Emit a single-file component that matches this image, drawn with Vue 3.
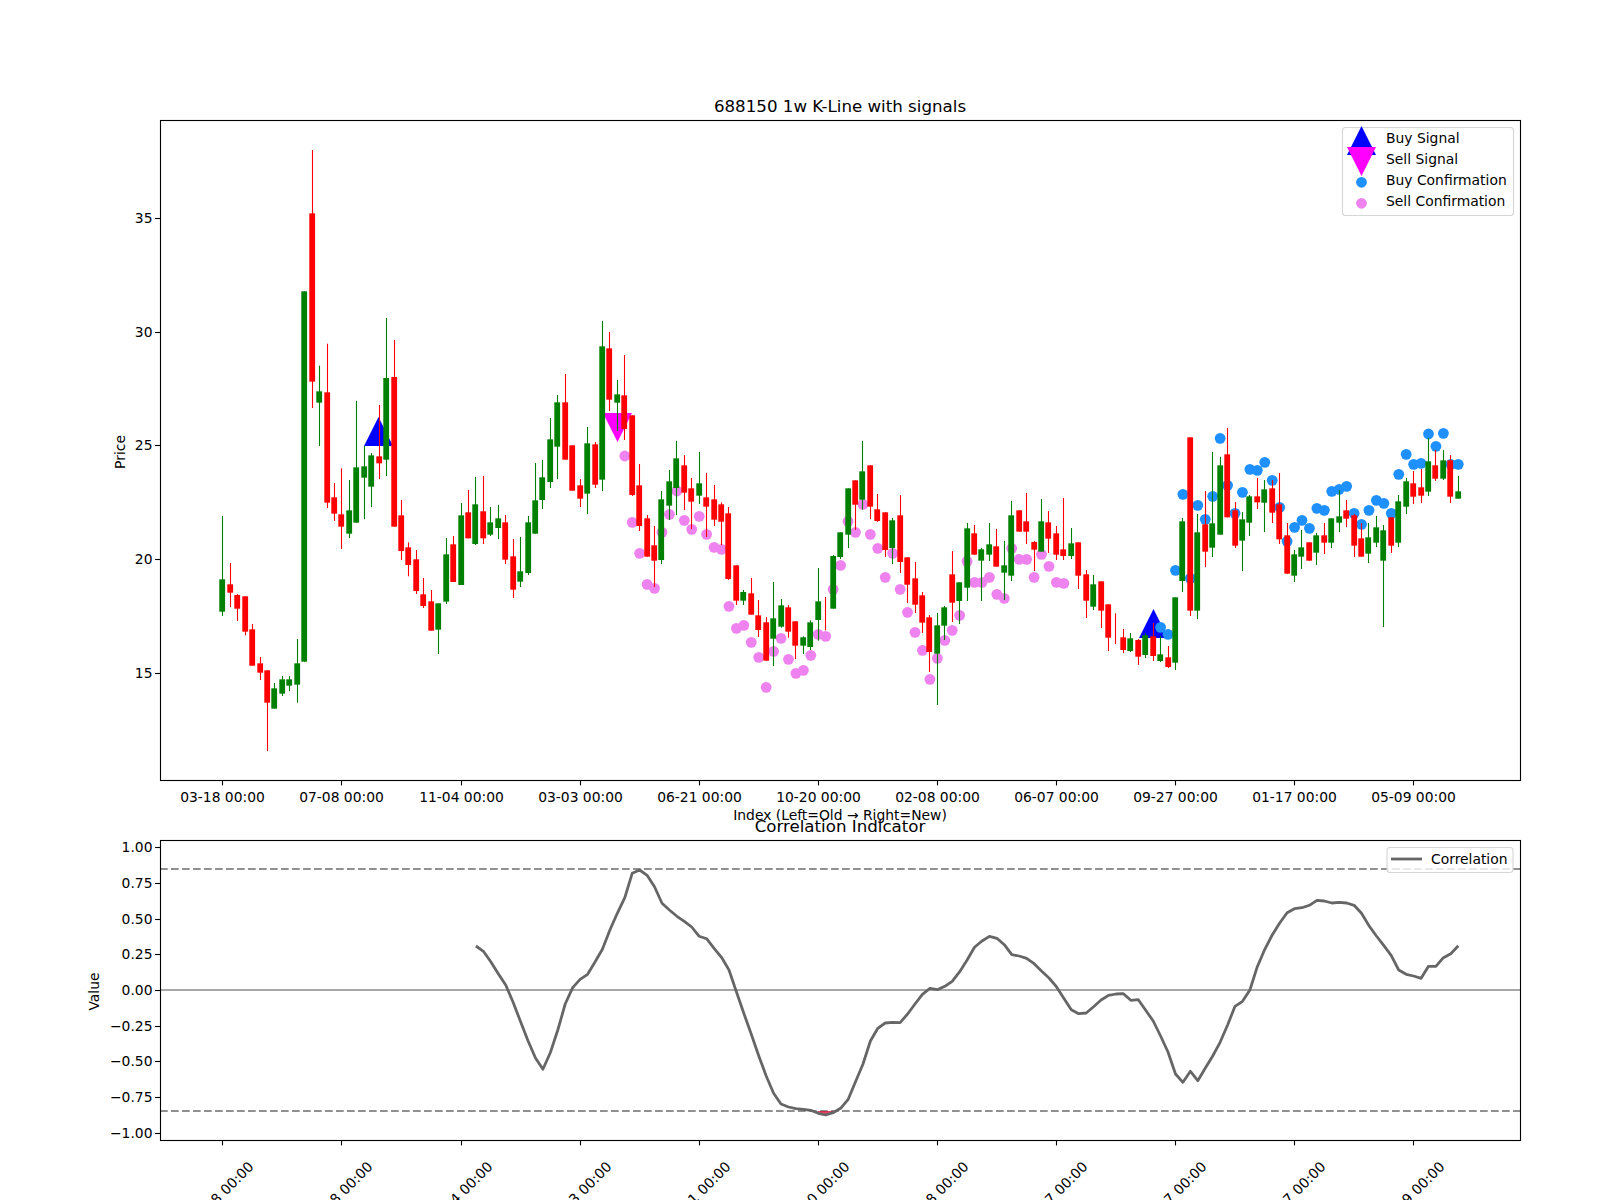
<script setup>
import { computed } from "vue"

// ------------------------------------------------------------
// Axes geometry (px on the 1600x1200 figure)
// ------------------------------------------------------------
const left = 160
const right = 1520
const priceTop = 120
const priceBottom = 780
const corrTop = 840
const corrBottom = 1140
const step = 7.442
const slotX = (i) => 222.9 + step * i
const priceY = (p) => 673.2 - (p - 15) * 22.78
const corrY = (v) => 990 - v * 142.7

// ------------------------------------------------------------
// Weekly candles: [colour, high, low, bodyTop, bodyBottom]
// in 1/3 px, measured from the "top" of their block
// ------------------------------------------------------------
const blocks = [
  { top: 380, rows: [
    ["g",408,708,598,695],["r",549,681,613,638],["r",642,723,645,686],["r",649,766,649,755],
    ["r",732,857,748,857],["r",831,900,850,878],["r",871,1113,871,968],["g",909,986,925,986],
    ["g",888,948,898,941],["g",888,933,898,917],["g",777,968,850,914],["g",-266,845,-266,845],
    ["r",-690,84,-500,5],["g",-43,198,34,68],["r",-109,384,37,368],["r",309,423,352,401],
    ["r",265,507,403,440],["g",300,474,391,461],["g",63,428,262,428],["g",198,417,259,293],
    ["g",219,381,226,320],["r",75,297,229,250],["g",-186,288,-6,239],["r",-120,440,-9,440],
    ["r",360,540,406,513],["r",487,589,502,555],["r",510,642,538,633],["r",594,684,643,678],
    ["r",630,752,664,752],["g",670,822,670,749],["g",474,672,523,665],["r",468,606,493,606],
    ["g",369,615,406,615],["r",330,475,397,475],["g",291,495,373,492],
  ] },
  { top: 310, rows: [
    ["r",498,702,604,685],["g",591,678,637,674],["g",585,687,625,654],["r",615,762,637,749],
    ["r",687,864,739,839],["g",681,831,784,815],["g",618,795,637,789],["g",459,671,571,671],
    ["g",450,597,502,570],["g",324,534,388,516],["g",255,507,277,410],["r",192,449,277,449],
    ["r",406,542,406,542],["r",507,591,526,566],["g",351,612,400,551],["r",396,534,403,524],
    ["g",33,543,109,509],["r",66,303,115,269],["g",210,363,253,278],["r",135,390,256,357],
    ["r",316,558,316,555],["r",462,663,526,648],["r",615,740,625,740],["r",648,831,706,752],
    ["g",543,762,568,750],["g",480,630,514,587],["g",393,615,445,534],["r",435,600,466,548],
    ["r",504,657,535,575],["g",426,582,520,557],["r",489,681,562,590],["r",525,648,568,629],
    ["r",577,705,583,635],["r",591,810,610,807],["r",766,885,766,872],["g",840,885,846,872],
    ["r",804,914,850,914],["r",870,981,916,960],
  ] },
  { top: 420, rows: [
    ["r",591,722,607,722],["g",486,738,595,656],["g",537,623,556,620],["r",555,653,562,635],
    ["r",604,717,604,677],["g",649,702,652,677],["g",601,690,607,681],["g",444,662,544,600],
    ["r",531,631,581,581],["g",405,566,408,566],["g",337,417,337,411],["g",205,384,205,344],
    ["r",181,330,181,254],["g",63,269,154,239],["r",136,297,136,260],["r",222,306,268,303],
    ["r",277,411,277,390],["g",294,432,301,384],["r",225,459,286,426],["r",412,549,412,494],
    ["r",426,579,475,554],["r",516,639,526,608],["r",585,756,592,696],["g",579,855,616,701],
    ["g",558,660,562,617],["r",393,606,463,548],["g",487,612,487,543],["g",309,543,325,503],
    ["r",315,404,340,404],["g",384,543,388,422],["g",309,423,373,404],["r",327,440,379,440],
    ["g",363,540,436,458],["g",243,483,286,467],["r",271,335,271,335],["r",219,372,304,335],
    ["r",363,453,366,389],
  ] },
  { top: 400, rows: [
    ["g",297,455,364,455],["r",333,459,367,416],["r",378,480,400,464],["r",294,480,448,468],
    ["g",384,477,430,468],["r",427,567,427,527],["r",510,654,523,602],["g",525,630,553,620],
    ["r",544,684,544,632],["r",613,753,613,713],["r",640,732,686,686],["r",687,759,712,750],
    ["g",699,756,715,753],["r",717,795,720,770],["g",700,774,706,765],["r",669,783,709,768],
    ["g",708,786,763,783],["r",738,804,772,801],["g",592,810,592,788],["g",354,576,364,543],
    ["r",112,648,112,632],["g",342,657,397,632],["r",273,501,373,455],["g",156,471,370,443],
    ["g",171,404,196,404],["r",84,352,163,352],["r",306,444,331,437],["g",336,513,358,422],
    ["g",285,408,289,368],["r",234,327,289,307],["g",240,396,268,308],["r",240,369,265,338],
    ["r",219,432,313,418],["r",369,521,406,521],["g",450,546,463,527],["g",390,507,442,470],
    ["r",427,482,427,482],["g",399,495,406,458],["r",369,462,406,428],["g",355,444,355,428],
    ["g",270,396,349,368],["r",300,381,331,356],["r",342,471,346,437],["r",369,470,415,470],
    ["g",369,489,412,461],["g",348,441,382,428],["g",375,681,391,482],["r",352,459,352,437],
    ["g",285,441,304,428],["g",234,342,244,320],["r",213,312,250,290],["r",207,309,262,287],
    ["g",114,288,184,275],["r",150,243,196,236],["g",150,240,181,236],["r",165,309,181,290],
    ["g",228,296,274,296],
  ] },
]

const candles = computed(() => {
  const out = []
  for (const b of blocks) {
    for (const [c, hi, lo, top, bot] of b.rows) {
      const i = out.length
      const cx = Math.floor(slotX(i))
      const y0 = b.top + top / 3
      const y1 = b.top + bot / 3
      out.push({
        i,
        color: c === "g" ? "#008000" : "#ff0000",
        wickX: cx + 0.5,
        hi: b.top + hi / 3,
        lo: b.top + lo / 3,
        bodyX: cx - 2.7,
        bodyY: y0,
        // a few weeks have no real body, only the wick shows
        bodyH: y1 - y0,
      })
    }
  }
  return out
})

// ------------------------------------------------------------
// Confirmation dots
// ------------------------------------------------------------
const sellA = [438,637,730,823,835,667,613,543,631,658,619,673,712,718,889,955,946,997,1042]
const sellB = [802,694,655,718,760,751,706,643,649,508,436,304,337,253,343,385,472,400,508,577,637,691,778,715,661,631,586,424,487,487,472,523,535,385,418,418,472,403,439,487,490]
const buyDots = [682,703,511,283,535,316,358,289,115,256,340,277,208,211,187,241,322,424,382,361,385,325,331,274,268,259,340,373,331,301,310,340,223,163,193,190,102,139,100,193,193]

const sellPoints = computed(() => [
  ...sellA.map((z, k) => ({ x: slotX(54 + k), y: 310 + z / 3 })),
  ...sellB.map((z, k) => ({ x: slotX(73 + k), y: 420 + z / 3 })),
])
const buyPoints = computed(() =>
  buyDots.map((z, k) => ({ x: slotX(126 + k), y: 400 + z / 3 }))
)

// ------------------------------------------------------------
// Correlation line, starts at candle 34
// ------------------------------------------------------------
const corrRaw = [
  288,304,335,371,405,457,515,572,624,658,608,540,462,413,388,373,336,298,240,190,143,70,60,76,110,160,
  180,199,214,231,259,266,295,322,360,425,490,553,617,678,730,762,771,776,778,781,790,795,788,775,749,
  695,643,573,535,519,517,518,492,462,433,415,419,409,394,365,330,292,273,259,265,284,314,318,325,341,
  363,384,410,445,479,491,489,470,450,436,432,431,451,449,481,513,558,606,672,697,664,692,655,618,577,
  525,469,454,420,350,298,255,219,188,176,173,166,151,153,159,157,159,166,190,227,258,287,317,360,373,
  378,385,349,349,323,311,287,
]
const corrLine = computed(() =>
  corrRaw.map((z, k) => `${slotX(34 + k).toFixed(1)},${(850 + z / 3).toFixed(1)}`).join(" ")
)
const corrFill = "816.5,1111 825,1115.5 835,1111"

// ------------------------------------------------------------
// Axes ticks
// ------------------------------------------------------------
const dates = ["03-18","07-08","11-04","03-03","06-21","10-20","02-08","06-07","09-27","01-17","05-09"]
const xTicks = dates.map((d, k) => ({
  x: Math.floor(slotX(k * 16)) + 0.5,
  label: `${d} 00:00`,
}))
const priceTicks = [15, 20, 25, 30, 35].map((p) => ({ y: Math.round(priceY(p)) + 0.5, label: String(p) }))
const corrTicks = [1, 0.75, 0.5, 0.25, 0, -0.25, -0.5, -0.75, -1].map((v) => ({
  y: Math.round(corrY(v)) + 0.5,
  label: v.toFixed(2).replace("-", "\u2212"),
}))
</script>

<template>
  <div class="figure">
    <svg class="chart" width="1600" height="1200" viewBox="0 0 1600 1200">
      <defs>
        <clipPath id="corr-clip">
          <rect :x="left" :y="corrTop" :width="right - left" :height="corrBottom - corrTop" />
        </clipPath>
      </defs>

      <!-- Price panel -->
      <text class="title" x="840" y="111.5">688150 1w K-Line with signals</text>

      <polygon class="buy" points="378.5,417 364,446 393,446" />
      <polygon class="buy" points="1153.5,609 1139,638 1168,638" />
      <polygon class="sell" points="603,413 632,413 617.5,442" />

      <circle v-for="(p, k) in sellPoints" :key="'s' + k" class="dot-sell" :cx="p.x" :cy="p.y" r="5.4" />
      <circle v-for="(p, k) in buyPoints" :key="'b' + k" class="dot-buy" :cx="p.x" :cy="p.y" r="5.4" />

      <g v-for="c in candles" :key="c.i">
        <line :x1="c.wickX" :x2="c.wickX" :y1="c.hi" :y2="c.lo" :stroke="c.color" stroke-width="1.1" />
        <rect v-if="c.bodyH > 0" :x="c.bodyX" :y="c.bodyY" width="5.8" :height="c.bodyH" :fill="c.color" />
      </g>

      <rect class="spine" :x="left + 0.5" :y="priceTop + 0.5" :width="right - left" :height="priceBottom - priceTop" />

      <g v-for="t in xTicks" :key="'px' + t.label">
        <line class="tick" :x1="t.x" :x2="t.x" :y1="priceBottom" :y2="priceBottom + 5.4" />
        <text class="label" :x="t.x" y="801.5">{{ t.label }}</text>
      </g>
      <g v-for="t in priceTicks" :key="'py' + t.label">
        <line class="tick" :x1="left - 4.9" :x2="left" :y1="t.y" :y2="t.y" />
        <text class="label end" x="152.5" :y="t.y + 4.6">{{ t.label }}</text>
      </g>
      <text class="label" x="840" y="820">Index (Left=Old → Right=New)</text>
      <text class="label" transform="translate(124.5 452) rotate(-90)">Price</text>

      <!-- Legend, signals -->
      <rect class="legend" x="1342.5" y="127.5" width="171" height="88" rx="3" />
      <polygon class="buy" points="1361.5,126 1347,155 1376,155" />
      <polygon class="sell" points="1347,147 1376,147 1361.5,176" />
      <circle class="dot-buy" cx="1361.5" cy="182.3" r="5.4" />
      <circle class="dot-sell" cx="1361.5" cy="203.3" r="5.4" />
      <text class="label start" x="1386" y="143">Buy Signal</text>
      <text class="label start" x="1386" y="164">Sell Signal</text>
      <text class="label start" x="1386" y="185">Buy Confirmation</text>
      <text class="label start" x="1386" y="206">Sell Confirmation</text>

      <!-- Correlation panel -->
      <text class="title" x="840" y="831.5">Correlation Indicator</text>
      <g clip-path="url(#corr-clip)">
        <line class="zero" :x1="left" :x2="right" y1="990" y2="990" />
        <line class="band" :x1="left" :x2="right" y1="869" y2="869" />
        <line class="band" :x1="left" :x2="right" y1="1111" y2="1111" />
        <polygon class="corr-fill" :points="corrFill" />
        <polyline class="corr-line" :points="corrLine" />
      </g>
      <rect class="spine" :x="left + 0.5" :y="corrTop + 0.5" :width="right - left" :height="corrBottom - corrTop" />

      <g v-for="t in xTicks" :key="'cx' + t.label">
        <line class="tick" :x1="t.x" :x2="t.x" :y1="corrBottom" :y2="corrBottom + 5.4" />
        <text class="label" :transform="`translate(${t.x - 1.5} 1194) rotate(-45)`" y="5">{{ t.label }}</text>
      </g>
      <g v-for="t in corrTicks" :key="'cy' + t.label">
        <line class="tick" :x1="left - 4.9" :x2="left" :y1="t.y" :y2="t.y" />
        <text class="label end" x="152.5" :y="t.y + 4.6">{{ t.label }}</text>
      </g>
      <text class="label" transform="translate(99 991.5) rotate(-90)">Value</text>

      <!-- Legend, correlation -->
      <rect class="legend" x="1387" y="847.5" width="126" height="25" rx="3" />
      <line class="corr-line" x1="1391" x2="1422" y1="859" y2="859" />
      <text class="label start" x="1431" y="864">Correlation</text>
    </svg>
  </div>
</template>

<style scoped>
.figure {
  width: 1600px;
  height: 1200px;
  overflow: hidden;
  background: #fff;
}

.chart {
  display: block;
  font-family: "DejaVu Sans", sans-serif;
}

.title {
  font-size: 16.67px;
  text-anchor: middle;
  fill: #000;
}

.label {
  font-size: 13.89px;
  text-anchor: middle;
  fill: #000;
}

.label.end { text-anchor: end }
.label.start { text-anchor: start }

.spine {
  fill: none;
  stroke: #000;
  stroke-width: 1.11;
}

.tick {
  stroke: #000;
  stroke-width: 1.11;
}

.buy { fill: #0000ff }
.sell { fill: #ff00ff }
.dot-buy { fill: #1e90ff }
.dot-sell { fill: #ee82ee }

.legend {
  fill: #fff;
  fill-opacity: 0.8;
  stroke: #d6d6d6;
  stroke-width: 1.1;
}

.zero {
  stroke: #a8a8a8;
  stroke-width: 2.08;
}

.band {
  stroke: #909090;
  stroke-width: 2.2;
  stroke-dasharray: 7.7 3.3;
}

.corr-fill {
  fill: #dc143c;
  fill-opacity: 0.8;
}

.corr-line {
  fill: none;
  stroke: #666;
  stroke-width: 2.78;
  stroke-linejoin: round;
}
</style>
